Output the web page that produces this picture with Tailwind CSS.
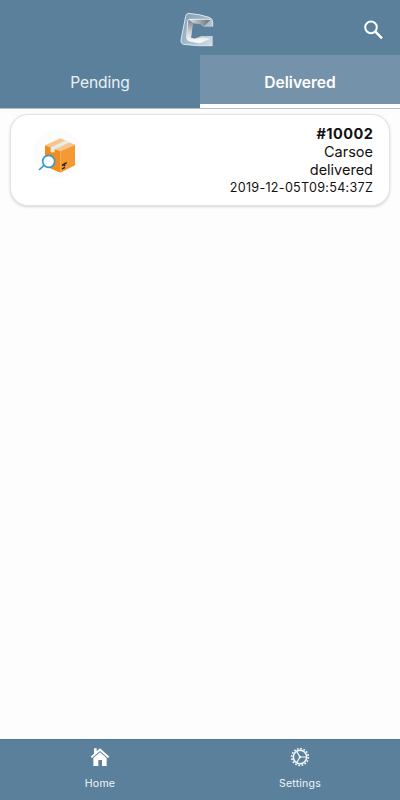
<!DOCTYPE html>
<html lang="en">
<head>
<meta charset="utf-8">
<title>Deliveries</title>
<script src="https://cdn.jsdelivr.net/npm/@tailwindcss/browser@4"></script>
</head>
<body class="font-['Inter',sans-serif]">
<div class="w-[400px] h-[800px] flex flex-col bg-[#fdfdfd] overflow-hidden">
  <header class="h-[55px] shrink-0 bg-[#5b809b] grid grid-cols-[60px_1fr_60px] pt-[5px]">
    <span></span>
    <svg class="w-[60px] h-[50px] justify-self-center -ml-[2px]" viewBox="0 0 180 150">
      <defs>
        <linearGradient id="a" x1="0" y1="0" x2="1" y2="1"><stop offset="0" stop-color="#7d9bb2"/><stop offset=".5" stop-color="#a3b8c8"/><stop offset="1" stop-color="#d5dfe7"/></linearGradient>
        <linearGradient id="b" x1="0" y1="0" x2="1" y2="0"><stop offset="0" stop-color="#e4e6e7"/><stop offset="1" stop-color="#66717a"/></linearGradient>
        <linearGradient id="c" x1="0" y1="0" x2="0" y2="1"><stop offset="0" stop-color="#777f86"/><stop offset=".6" stop-color="#d8d9da"/><stop offset="1" stop-color="#fff"/></linearGradient>
      </defs>
      <path fill="url(#a)" d="M58 25Q90 27 120 37Q131 41 131 51V65H105L95 58L71 55L66 98L76 101L96 93H131V122Q85 124 43 118Q34 115 36 105L50 34Q51 26 58 25Z"/>
      <path fill="none" stroke="#dce7ef" stroke-width="3" stroke-linejoin="round" d="M131 64V51Q131 41 120 37Q90 27 58 25Q51 26 50 34L36 105Q34 115 43 118Q85 124 130 122"/>
      <path fill="url(#b)" d="M57 42H116L123 46L106 63L96 56L71 54Z"/>
      <path fill="url(#c)" d="M57 42L72 54L66 98L76 101L100 97L124 101L94 114L63 109Q53 107 54 99Z"/>
      <path fill="none" stroke="#f2f6f9" stroke-width="2.5" stroke-linejoin="round" d="M124 43H62Q57 43 56 49L53 99Q53 106 63 108L93 114"/>
    </svg>
    <svg class="w-[60px] h-[45px] mt-[5px]" viewBox="0 0 180 135" fill="none" stroke="#fff" stroke-width="6">
      <circle cx="93" cy="52" r="17.5"/><path stroke-width="7.5" d="M106 65L126 85"/>
    </svg>
  </header>
  <nav class="h-[53px] shrink-0 grid grid-cols-2 text-center text-[15.6px] leading-[55px] text-[#e9f1f6]">
    <div class="bg-[#5b809b] h-[53px]"><span class="tracking-[-0.1px]">Pending</span></div>
    <div class="bg-[#7492aa] border-b-[4px] border-white text-white font-semibold h-[53px]"><span>Delivered</span></div>
  </nav>
  <main class="flex-1 border-t border-[#b5bdc3] px-[10px] pt-[5px]">
    <article class="h-[92px] rounded-[18px] border border-[#e3e3e3] bg-white shadow-[0_1px_3px_rgba(0,0,0,0.16)] flex justify-between pl-[19px] pr-4 pt-[10px]">
      <svg class="w-[55px] h-[50px] mt-[4px]" viewBox="0 0 165 150">
        <circle cx="82" cy="75" r="73" fill="#fcfcfc"/>
        <path fill="#f9c58e" d="M45 49L91 28L135 47L91 67Z"/>
        <path fill="#f28c1c" d="M45 49L91 67V131L45 111Z"/>
        <path fill="#f39a34" d="M91 67L135 47V109L91 131Z"/>
        <path fill="#e6eeea" d="M62 56L108 34L120 40L74 61V71L70 68L67 71L62 68Z"/>
        <path stroke="#2a1c11" stroke-width="4" d="M96 109L110 101M101 111L106 108M96 120L105 115"/>
        <circle cx="56" cy="97" r="18" fill="#fff" stroke="#359ec4" stroke-width="5"/>
        <path stroke="#359ec4" stroke-width="5" d="M42 109L27 123"/>
      </svg>
      <div class="flex flex-col items-end text-[14.5px] leading-[18px] text-[#111]">
        <b class="font-bold tracking-[0.45px] -mr-[0.3px]">#10002</b>
        <span>Carsoe</span>
        <span>delivered</span>
        <span class="text-[12.6px] leading-[17px] tracking-[0.28px] -mr-[0.2px]">2019-12-05T09:54:37Z</span>
      </div>
    </article>
  </main>
  <footer class="h-[61px] shrink-0 bg-[#5b809b] border-t border-[#507590] grid grid-cols-2 text-[#edf5fa] text-[10.6px] leading-[14px]">
    <div class="flex flex-col items-center pt-[7px]">
      <svg class="w-5 h-5" viewBox="0 0 60 60" fill="#fff">
        <path d="M2 29L12 20V4H20V13L30 4L58 29L54 33L30 12L6 33Z"/>
        <path d="M10 33L30 16L50 33V57H36V39H25V57H10Z"/>
      </svg>
      <span class="mt-[10px] tracking-[0.2px]">Home</span>
    </div>
    <div class="flex flex-col items-center pt-[7px]">
      <svg class="w-5 h-5" viewBox="0 0 60 60" fill="none" stroke="#f4f9fc">
        <circle cx="30" cy="30" r="20" stroke-width="4.5"/>
        <circle cx="30" cy="30" r="25" stroke-width="5" stroke-dasharray="5 4.817"/>
        <path stroke-width="3.5" d="M31 30H50M30 30L20 13M30 30L20 47"/>
        <circle cx="30" cy="30" r="3" fill="#fff"/>
      </svg>
      <span class="mt-[10px] tracking-[0.2px]">Settings</span>
    </div>
  </footer>
</div>
</body>
</html>
